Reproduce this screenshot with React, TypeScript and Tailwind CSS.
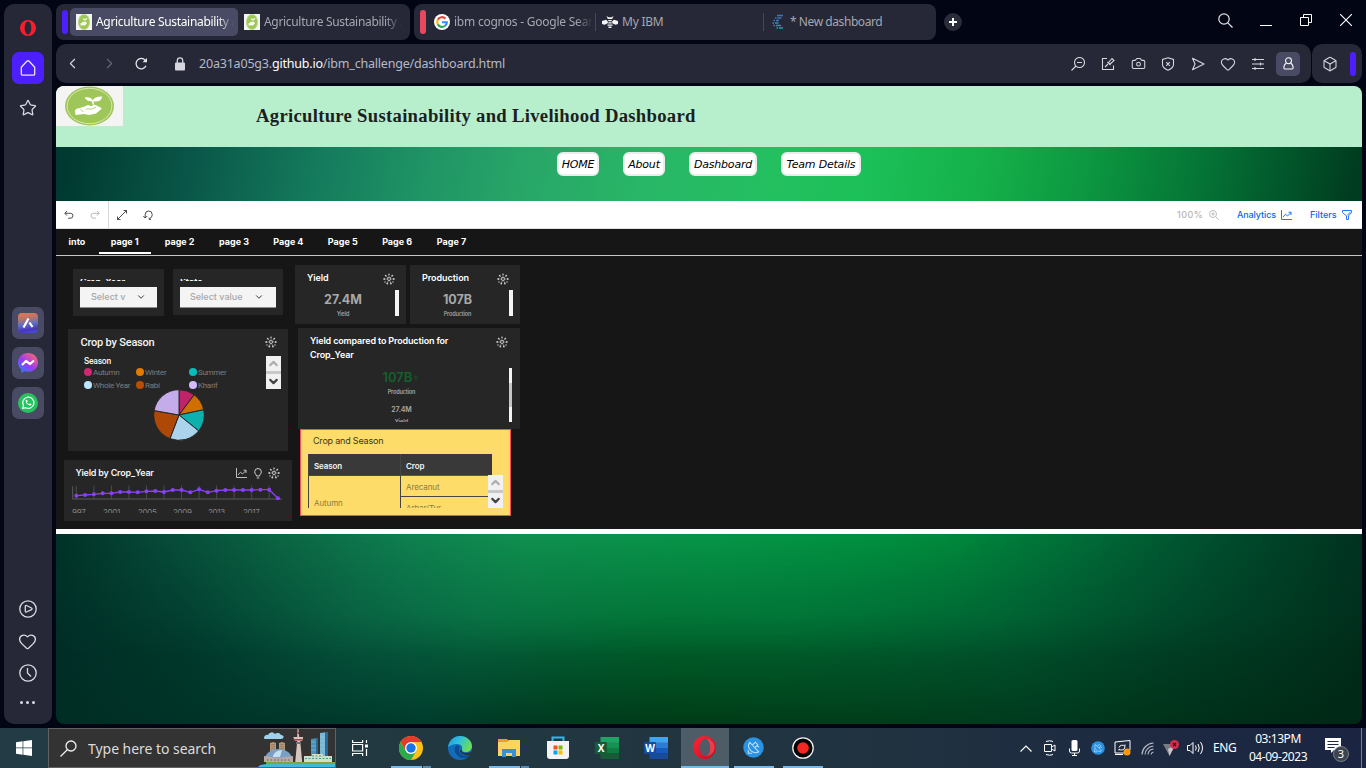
import React from "react";
import {
  ArrowDown, Box, Camera, ChevronDown, ChevronLeft, ChevronRight, ChevronUp, Heart, Star,
} from "lucide-react";

const UI = "font-['Noto_Sans',sans-serif]";
const PLEX = "font-['Inter',sans-serif]";

function OperaLogo({ size = 16 }: { size?: number }) {
  return (
    <svg width={size} height={size} viewBox="0 0 16 16">
      <path fillRule="evenodd" fill="#fa1e2d" d="M8 0a8 8 0 1 0 0 16A8 8 0 0 0 8 0Zm0 1.600c2 0 3.300 2.700 3.300 6.400S10 14.400 8 14.400 4.700 11.700 4.700 8 6 1.600 8 1.600Z" />
    </svg>
  );
}

function OperaAppLogo() {
  return (
    <svg width="23" height="23" viewBox="0 0 23 23">
      <defs>
        <linearGradient id="operaRing" x1="0" y1="0" x2="1" y2="1"><stop offset="0" stopColor="#ff2436" /><stop offset="1" stopColor="#c3101f" /></linearGradient>
      </defs>
      <path fillRule="evenodd" fill="url(#operaRing)" d="M11.500 0a11.500 11.500 0 1 0 0 23 11.500 11.500 0 0 0 0-23Zm.8 2.800c3 0 4.800 3.700 4.800 8.700s-1.800 8.700-4.800 8.700-5.300-3.700-5.300-8.700 2.300-8.700 5.300-8.700Z" />
      <path fill="#f2626c" opacity=".55" d="M13 2.800c5 .4 8.500 4 8.500 8.700S18 19.800 13 20.200c2.800-1.200 4.100-4.700 4.100-8.700S15.800 4 13 2.800Z" />
    </svg>
  );
}

function LeafLogo({ w, h }: { w: number; h: number }) {
  return (
    <svg width={w} height={h} viewBox="0 0 67 40" preserveAspectRatio="none" className="shrink-0">
      <rect width="67" height="40" fill="#f4f4f2" />
      <ellipse cx="33.500" cy="20" rx="24.500" ry="19.600" fill="#9fc659" />
      <ellipse cx="33.500" cy="20" rx="22.400" ry="17.700" fill="none" stroke="#dcebbd" strokeWidth=".9" />
      <path fill="#fff" d="M19 25l1-2 8-2.300 4-1.700 3.500 1.200 2-1.700 2 .5 4 2 2.500 1.500-6 5-7 1.500-5-1-8.500 1z" />
      <path fill="#fff" d="M36.700 18.500l-.9-3.300c-3.200.3-6.200-1-7-3.900 3.800-.6 7 .6 7.800 3 1.300-2.600 5-4.100 9.700-3.800-.5 3.800-3.700 5.700-8.800 4.800l.5 3.200z" />
      <path stroke="#9fc659" strokeWidth=".8" fill="none" d="M24 22.500l3.500 3.500M30 23h6l4-1.800" />
    </svg>
  );
}

function GoogleLogo() {
  return (
    <svg width="16" height="16" viewBox="0 0 32 32" className="shrink-0">
      <circle cx="16" cy="16" r="16" fill="#fff" />
      <g fill="none" strokeWidth="4.400">
        <path stroke="#ea4335" d="M7.500 11.500A9.600 9.600 0 0 1 22.800 9.200" />
        <path stroke="#fbbc05" d="M7.500 11.500a9.600 9.600 0 0 0 0 9" />
        <path stroke="#34a853" d="M7.500 20.500a9.600 9.600 0 0 0 14.800 3" />
        <path stroke="#4285f4" d="M22.300 23.500A9.600 9.600 0 0 0 25.600 16.500H16" />
      </g>
    </svg>
  );
}

function BeeLogo() {
  return (
    <svg width="16" height="12" viewBox="0 0 16 12" className="shrink-0" fill="#f4f4f4">
      <path d="M0 5l4-1.200 1.800 1.400v2L2.500 8.800 0 8zM16 5l-4-1.200-1.800 1.400v2l3.300 1.600L16 8zM4.500 0l2 1.200h3l2-1.200-1.300 3H5.800zM6.300 4h3.400v1.200H6.300zM6.300 6.200h3.400v1.200H6.300zM5.500 8.400h5v1.300h-5zM6.500 10.600h3V12h-3z" />
    </svg>
  );
}

function CognosLogo() {
  return (
    <svg width="12" height="16" viewBox="0 0 12 16" className="shrink-0" fill="none" strokeWidth="1.500">
      <path stroke="#3b78b8" d="M5 1.500h6M3 4h1.500M5.500 4h4M1.500 6.500H3M4 6.500h3" />
      <path stroke="#2f95a6" d="M.5 9H2M3 9h3.500M1.500 11.500H3M4 11.500h5M4.500 14H6M7 14h4" />
    </svg>
  );
}

function Gear({ className = "" }: { className?: string }) {
  return (
    <svg width="12" height="12" viewBox="0 0 12 12" className={"shrink-0 " + className} fill="none" stroke="#cfcfcf">
      <circle cx="6" cy="6" r="1.500" strokeWidth=".9" />
      <g fill="#cfcfcf" stroke="none">
        <circle cx="6" cy="1.300" r=".8" /><circle cx="4.300" cy="10.500" r=".9" /><circle cx="7.900" cy="10.500" r=".9" />
        <circle cx="1.200" cy="6" r=".9" /><circle cx="10.800" cy="6" r=".9" />
        <circle cx="2.700" cy="2.600" r=".9" /><circle cx="9.300" cy="2.600" r=".9" />
        <circle cx="2" cy="9" r=".7" /><circle cx="10" cy="9" r=".7" />
      </g>
      <path strokeWidth=".5" d="M6 2v2.500M4.500 10l.8-2.600M7.700 10l-.9-2.600M2 6h2.500M10 6H7.500M3 3l2 2M9 3L7 5" />
    </svg>
  );
}

function ChartIcon({ className = "" }: { className?: string }) {
  return (
    <svg width="11" height="10" viewBox="0 0 11 10" fill="none" stroke="currentColor" className={"shrink-0 " + className}>
      <path d="M.5 0v9.500H11M2 7l2.500-2.800L6.500 6l3.500-3.500M7.500 2.200H10V5" strokeWidth=".9" />
    </svg>
  );
}

function Sidebar() {
  const cell = "flex h-8 w-8 shrink-0 items-center justify-center";
  return (
    <aside className="ml-1 mt-1 flex h-[720px] w-12 shrink-0 flex-col items-center rounded-[10px] bg-[#262837] pt-2 text-[#d9dae3]">
      <div className={cell}><OperaLogo /></div>
      <div className={cell + " mt-2 rounded-[7px] bg-[#4d1fff]"}>
        <svg width="18" height="18" viewBox="0 0 18 18" fill="none" stroke="#e9e6ff" strokeWidth="1.300" strokeLinejoin="round">
          <path d="M2.300 8.200L7.800 2.300a1.700 1.700 0 0 1 2.400 0l5.500 5.900V15a1.200 1.200 0 0 1-1.200 1.200h-11A1.200 1.200 0 0 1 2.300 15z" />
        </svg>
      </div>
      <div className={cell + " mt-2"}><Star size={18} strokeWidth={1.700} /></div>
      <div className="mt-[183px] flex flex-col gap-2">
        <div className={cell + " rounded-[7px] bg-[#484b63]"}>
          <div className="flex h-5 w-5 items-center justify-center rounded-[4px] bg-[linear-gradient(170deg,#e07a52_0%,#bd7368_28%,#5b70c5_55%,#4a35b5_80%,#3f57e8_100%)]">
            <svg width="12" height="12" viewBox="0 0 12 12" fill="none" stroke="#fff" strokeWidth="2.200"><path d="M1.500 10.500L6.500 1.500M7.500 5.500l3 4.500" /></svg>
          </div>
        </div>
        <div className={cell + " rounded-[7px] bg-[#484b63]"}>
          <svg width="20" height="20" viewBox="0 0 20 20">
            <defs><linearGradient id="msg" x1="0" y1="1" x2=".8" y2="0"><stop offset="0" stopColor="#1689ff" /><stop offset=".5" stopColor="#9a3bf5" /><stop offset="1" stopColor="#ff6470" /></linearGradient></defs>
            <path fill="url(#msg)" d="M10 0C4.300 0 0 4.100 0 9.600c0 2.900 1.200 5.300 3.200 7V20l3.200-1.700c1.100.3 2.300.5 3.600.5 5.700 0 10-4 10-9.400S15.700 0 10 0z" />
            <path fill="none" stroke="#fff" strokeWidth="2.200" strokeLinejoin="round" d="M4 12l4-4 4 3 4-3.500" />
          </svg>
        </div>
        <div className={cell + " rounded-[7px] bg-[#484b63]"}>
          <svg width="20" height="20" viewBox="0 0 20 20">
            <circle cx="10" cy="10" r="10" fill="#25c35e" />
            <path d="M4.700 15.500l.8-2.900a5.600 5.600 0 1 1 2.200 2.100z" fill="none" stroke="#fff" strokeWidth="1.200" />
            <path d="M7.600 7.500c0 2.500 2.300 4.900 4.700 4.900.8 0 1.300-.6 1.200-1.200l-1.600-.9-.9.9c-1-.4-1.600-1-2-2l.8-.9-.8-1.500c-.7-.1-1.400.2-1.400.7z" fill="#fff" />
          </svg>
        </div>
      </div>
      <div className="mt-[174px] flex flex-col items-center pr-px">
        <div className={cell}>
          <svg width="18" height="18" viewBox="0 0 18 18" fill="none" stroke="currentColor" strokeWidth="1.300" strokeLinejoin="round"><circle cx="9" cy="9" r="8.200" /><path d="M6.300 6.200C6.300 5.500 7 5.300 7.500 5.500L12.500 8q1.200.8 0 1.600L7.500 12c-.6.300-1.200 0-1.200-.7z" /></svg>
        </div>
        <div className={cell}><Heart size={19} strokeWidth={1.700} /></div>
        <div className={cell}>
          <svg width="18" height="18" viewBox="0 0 18 18" fill="none" stroke="currentColor" strokeWidth="1.300"><circle cx="9" cy="9" r="8.200" /><path d="M8.500 4v5l3.500 3.500" /></svg>
        </div>
        <div className="flex h-[27px] items-center gap-[3px]">
          <i className="h-[3px] w-[3px] rounded-full bg-current" /><i className="h-[3px] w-[3px] rounded-full bg-current" /><i className="h-[3px] w-[3px] rounded-full bg-current" />
        </div>
      </div>
    </aside>
  );
}

function TabStrip() {
  const fade = "overflow-hidden whitespace-nowrap [mask-image:linear-gradient(to_right,black_88%,transparent)]";
  return (
    <div className={UI + " mt-1 flex h-9 text-[12px] tracking-[-0.230px] text-[#a5a7b0]"}>
      <div className="flex w-[354px] items-center rounded-lg bg-[#262837] pl-[6px] tracking-[-0.320px]">
        <div className="h-6 w-[6px] rounded-[3px] bg-[#4d1fff]" />
        <div className="ml-[2px] flex h-7 w-[168px] items-center rounded-[5px] bg-[#484b63] pl-[6px] text-white">
          <LeafLogo w={16} h={16} />
          <span className={fade + " ml-1 w-[138px]"}>Agriculture Sustainability and</span>
        </div>
        <div className="flex items-center pl-[6px]">
          <LeafLogo w={16} h={16} />
          <span className={fade + " ml-1 w-[138px]"}>Agriculture Sustainability and</span>
        </div>
      </div>
      <div className="ml-1 flex w-[522px] items-center rounded-lg bg-[#262837] pl-[6px]">
        <div className="h-6 w-[6px] rounded-[3px] bg-[#e8485f]" />
        <div className="ml-2 flex h-[18px] w-[162px] items-center border-r border-[#444763]">
          <GoogleLogo />
          <span className={fade + " ml-1 w-[139px]"}>ibm cognos - Google Search</span>
        </div>
        <div className="flex h-[18px] w-[168px] items-center border-r border-[#444763] pl-[6px]">
          <BeeLogo /><span className="ml-1">My IBM</span>
        </div>
        <div className="flex items-center pl-2"><CognosLogo /><span className="ml-[6px] tracking-[-0.430px]">* New dashboard</span></div>
      </div>
      <div className="ml-2 flex h-9 w-[18px] items-center">
        <div className="flex h-[18px] w-[18px] items-center justify-center rounded-full bg-[#2a2c3a]">
          <svg width="8" height="8" viewBox="0 0 8 8" stroke="#fff" strokeWidth="2"><path d="M4 0v8M0 4h8" /></svg>
        </div>
      </div>
      <div className="ml-auto flex h-8 w-40 text-[#e6e6ea]">
        <div className="flex w-10 items-center justify-center pr-px">
          <svg width="15" height="15" viewBox="0 0 15 15" fill="none" stroke="#e6e6ea" strokeWidth="1.200"><circle cx="6" cy="6" r="5.200" /><path d="M9.800 9.800l4.700 4.700" /></svg>
        </div>
        <div className="flex w-10 items-center justify-center"><i className="mt-[10px] h-px w-3 bg-white" /></div>
        <div className="flex w-10 items-center justify-center">
          <svg width="12" height="12" viewBox="0 0 12 12" fill="none" stroke="#fff"><path d="M.5 3.500h8v8h-8zM3.500 3.500v-3h8v8h-3" /></svg>
        </div>
        <div className="flex w-10 items-center justify-center">
          <svg width="12" height="12" viewBox="0 0 12 12" stroke="#fff" strokeWidth="1.100"><path d="M0 0l12 12M12 0L0 12" /></svg>
        </div>
      </div>
    </div>
  );
}

function AddressBar() {
  const c = "flex w-[30px] items-center justify-center";
  const s = { width: 14, height: 14, viewBox: "0 0 14 14", fill: "none", stroke: "currentColor", strokeWidth: 1.1 } as const;
  return (
    <div className="mt-1 flex h-[39px] gap-px pr-1 text-[#d5d6de]">
      <div className="flex w-[1255px] rounded-[10px] bg-[#262837] pr-2">
        <div className="flex w-[33px] items-center justify-center"><ChevronLeft size={17} strokeWidth={1.600} /></div>
        <div className="flex w-[41px] items-center justify-center text-[#646778]"><ChevronRight size={17} strokeWidth={1.600} /></div>
        <div className="flex w-[22px] items-center justify-center">
          <svg width="12" height="13" viewBox="0 0 12 13" fill="none" stroke="#e8e8ee" strokeWidth="1.300"><path d="M11 8.800A5.200 5.200 0 1 1 10.300 3.300" /><path d="M7.500 5.200H12V1z" fill="#e8e8ee" stroke="none" /></svg>
        </div>
        <div className="ml-[17px] flex w-[22px] items-center justify-center">
          <svg width="10" height="14" viewBox="0 0 10 14"><rect y="5.500" width="10" height="8" rx="1" fill="#d5d6de" /><path d="M2.300 6V3.500a2.700 2.700 0 0 1 5.400 0V6" fill="none" stroke="#d5d6de" strokeWidth="1.300" /></svg>
        </div>
        <div className={UI + " ml-2 flex items-center pt-px text-[12.500px] tracking-[-0.200px] text-[#b3bac8]"}>20a31a05g3.<span className="text-white">github.io</span>/ibm_challenge/dashboard.html</div>
        <div className="ml-auto flex">
          <div className={c}><svg {...s}><circle cx="8.500" cy="5.500" r="5" /><path d="M5 9l-4.500 4.500M6 5.500h5" /></svg></div>
          <div className={c}><svg {...s}><path d="M6 1.500H1.500v11h11V8.500M4 10l3-3M6.500 5l3 3M7.500 5.500L11 1.500l2 2-4 3.700z" /></svg></div>
          <div className={c}><Camera size={15} strokeWidth={1.700} /></div>
          <div className={c}><svg {...s}><path d="M7 .8l5.500 1.700v5c0 2.500-2.500 4.500-5.500 5.700C4 12 1.500 10 1.500 7.500v-5zM5.200 5.200l3.600 3.600M8.800 5.200L5.200 8.800" /></svg></div>
          <div className={c}><svg {...s} strokeLinejoin="round"><path d="M1.500 1.200L13 7 1.500 12.800 4 7z" /></svg></div>
          <div className={c}><Heart size={16} strokeWidth={1.600} /></div>
          <div className={c}><svg {...s}><path d="M1 2.500h12M1 7h12M1 11.500h12M4 1v3M9.500 5.500v3M4 10v3" /></svg></div>
          <div className={c}>
            <div className="flex h-6 w-6 shrink-0 items-center justify-center rounded-[5px] bg-[#484b63]">
              <svg {...s} width={13} height={13} stroke="#fff"><circle cx="7" cy="4" r="3.200" /><path d="M4.700 6.700C3 7.500 2 9.500 2 11.500c0 1 .6 1.500 1.500 1.500h7c.9 0 1.500-.5 1.500-1.500 0-2-1-4-2.700-4.800" /></svg>
            </div>
          </div>
        </div>
      </div>
      <div className="flex w-[50px] items-center rounded-[10px] bg-[#262837] pl-[10px]">
        <Box size={16} strokeWidth={1.600} /><div className="ml-3 h-6 w-[6px] rounded-[3px] bg-[#4d1fff]" />
      </div>
    </div>
  );
}

function Banner() {
  const items = [["HOME", "w-[42px]"], ["About", "w-[42px]"], ["Dashboard", "w-[68px]"], ["Team Details", "w-[80px]"]];
  return (
    <>
      <header className="flex h-[61px] items-start bg-[#b7efcd]">
        <LeafLogo w={67} h={40} />
        <h1 className="ml-[133px] mt-[18px] whitespace-nowrap font-['Liberation_Serif',serif] text-[18.700px] font-bold leading-6 tracking-[0.280px] text-[#1c1f22]">Agriculture Sustainability and Livelihood Dashboard</h1>
      </header>
      <nav className="flex h-[54px] items-start gap-6 bg-[linear-gradient(100deg,#003930_1%,#0a5849_11%,#147a5c_20%,#1f9365_28%,#28a668_36%,#28b667_45%,#24c060_55%,#1cc058_62%,#15b04a_71%,#0c9640_79%,#057636_87%,#025a2c_93%,#003d20_99%)] pl-[501px] pt-[5px]">
        {items.map(([t, w]) => (
          <a key={t} className={w + " flex h-6 items-center justify-center whitespace-nowrap rounded-[6px] border-2 border-[#ececec] bg-white pt-[2px] font-['DejaVu_Sans',sans-serif] text-[11px] italic tracking-[-0.200px] text-black"}>{t}</a>
        ))}
      </nav>
    </>
  );
}

function CognosBar() {
  return (
    <div className={PLEX + " flex h-7 items-center border-b border-[#e0e0e0] bg-white text-[9px] font-medium text-[#0f62fe]"}>
      <div className="flex h-full w-[53px] items-center border-r border-[#d8d8d8] pl-2 text-[#393939]">
        <svg width="10" height="8" viewBox="0 0 10 8" fill="none" stroke="currentColor" strokeWidth=".9"><path d="M3 0L.8 2.300 3 4.600M1 2.300h5.500a2.400 2.400 0 0 1 0 4.900H4" /></svg>
        <svg width="10" height="8" viewBox="0 0 10 8" fill="none" stroke="#b0b0b0" strokeWidth=".9" className="ml-4"><path d="M7 0l2.200 2.300L7 4.600M9 2.300H3.500a2.400 2.400 0 0 0 0 4.900H6" /></svg>
      </div>
      <svg width="10" height="10" viewBox="0 0 10 10" fill="none" stroke="#393939" strokeWidth=".9" className="ml-2"><path d="M6.500.5h3v3M9.500.5L.5 9.500M.5 6.500v3h3" /></svg>
      <svg width="10" height="10" viewBox="0 0 10 10" fill="none" stroke="#393939" strokeWidth=".9" className="ml-4"><path d="M.3 6l1.900 2 2-2M2.200 7.800V4.500a3.500 3.500 0 0 1 7 0c0 2-1.200 3.500-2.700 4.500M8 9.400H6.200V7.600" /></svg>
      <span className="ml-auto tracking-[0.400px] text-[#b5b5b5]">100%</span>
      <svg width="10" height="10" viewBox="0 0 10 10" fill="none" stroke="#b5b5b5" strokeWidth=".9" className="ml-[6px]"><circle cx="4" cy="4" r="3.500" /><path d="M6.600 6.600l3 3M4 2.300v3.400M2.300 4h3.400" /></svg>
      <span className="ml-[18px] w-[40px] tracking-[-0.100px]">Analytics</span><ChartIcon className="ml-[4px]" />
      <span className="ml-[18px] w-[27px]">Filters</span>
      <svg width="10" height="10" viewBox="0 0 10 10" fill="none" stroke="#2f74fe" strokeWidth="1" className="ml-[5px] mr-[10px]"><path d="M.5.5h9v2L6.500 6v3.500h-2V6L.5 2.500zM5 5.500l3.500-3.500" /></svg>
    </div>
  );
}

function PageTabs() {
  return (
    <div className={PLEX + " flex h-[27px] border-b border-[#c6c6c6] bg-[#161616] text-[9px] font-bold text-white"}>
      <div className="flex w-[42px] items-center justify-center pb-px">into</div>
      {["page 1", "page 2", "page 3", "Page 4", "Page 5", "Page 6", "Page 7"].map((t, i) => (
        <div key={t} className="flex w-[54.400px] justify-center">
          <div className={"flex h-[25px] w-[52px] items-center justify-center " + (i === 0 ? "border-b-2 border-white pt-[2px] pr-px" : "")}>{t}</div>
        </div>
      ))}
    </div>
  );
}

function FilterCard({ title, value, card, box, label }: { title: string; value: string; card: string; box: string; label: string }) {
  return (
    <div className={card + " bg-[#262626] pl-[7px] pt-[10px]"}>
      <div className="h-[2px] overflow-hidden text-[9px] font-semibold leading-[6px] text-white">{title}</div>
      <div className={box + " mt-[6px] flex h-[21px] items-center border-b border-[#8d8d8d] bg-[#f4f4f4] text-[9px] font-medium text-[#a8a8a8]"}>
        <span className={label + " overflow-hidden whitespace-nowrap"}>{value}</span>
        <ChevronDown size={10} strokeWidth={2.400} className="text-[#393939]" />
      </div>
    </div>
  );
}

function Kpi({ title, value, w, mid }: { title: string; value: string; w: string; mid: string }) {
  return (
    <div className={w + " relative h-[59px] bg-[#262626] pt-[7px]"}>
      <div className="flex h-[14px] items-start justify-between pl-3 pr-[11px]">
        <span className="text-[9px] font-semibold leading-3 tracking-[-0.050px] text-white">{title}</span><Gear className="mt-px" />
      </div>
      <div className={mid + " mt-[7px] text-center text-[12.500px] font-bold leading-[14px] text-[#a8a8a8]"}>{value}</div>
      <div className={mid + " mt-[4px] text-center text-[5.500px] font-semibold leading-[6px] tracking-[-0.150px] text-[#a0a0a0]"}>{title}</div>
      <div className="absolute right-[7px] top-[25px] h-[26px] w-1 bg-[#f4f4f4]" />
    </div>
  );
}

function ScrollButtons() {
  return (
    <div className="flex h-[33px] w-[15px] flex-col justify-between bg-[#c8c8c8]">
      <div className="flex h-[15px] items-center justify-center bg-[#f1f1f1] text-[#b0b0b0]"><ChevronUp size={13} strokeWidth={4} /></div>
      <div className="flex h-[15px] items-center justify-center bg-[#f1f1f1] text-[#454545]"><ChevronDown size={13} strokeWidth={4} /></div>
    </div>
  );
}

const SLICES: [number, number, string][] = [
  [0, 37, "#c02468"], [37, 78, "#d06f00"], [78, 129, "#0cb0ac"], [129, 201, "#abd4ec"], [201, 280, "#ad4806"], [280, 360, "#c4abea"],
];
const at = (deg: number) => `${26 + 25.3 * Math.sin((deg * Math.PI) / 180)} ${26 - 25.3 * Math.cos((deg * Math.PI) / 180)}`;

function SeasonCard() {
  const legend = [["Autumn", "bg-[#d12771]"], ["Winter", "bg-[#e07a00]"], ["Summer", "bg-[#08bdba]"], ["Whole Year", "bg-[#bae6ff]"], ["Rabi", "bg-[#ba4e00]"], ["Kharif", "bg-[#d4bbff]"]];
  return (
    <div className="ml-1 mt-[13px] h-[122px] w-[220px] bg-[#262626] pt-[7px]">
      <div className="flex h-[13px] items-start justify-between pl-[12.500px] pr-[11px]">
        <span className="pt-px font-['Roboto',sans-serif] text-[11px] font-medium leading-3 tracking-[-0.200px] text-[#f4f4f4]">Crop by Season</span><Gear />
      </div>
      <div className="mt-[7px] flex justify-between pr-[7px]">
        <div className="pl-[16px] font-['Roboto',sans-serif] text-[8px]">
          <div className="text-[8.500px] font-medium leading-[10px] tracking-[-0.200px] text-[#f4f4f4]">Season</div>
          <div className="mt-px grid h-[22px] grid-cols-[52px_53px_50px] gap-y-[4px] text-[#7d7d7d]">
            {legend.map(([t, c]) => (
              <div key={t} className="flex h-[9px] items-center gap-px whitespace-nowrap leading-[9px] tracking-[-0.280px]"><i className={c + " h-2 w-2 shrink-0 rounded-full"} /><span className="pt-[2px]">{t}</span></div>
            ))}
          </div>
        </div>
        <ScrollButtons />
      </div>
      <svg width="52" height="52" viewBox="0 0 52 52" className="ml-[84.500px]">
        {SLICES.map(([a, b, c]) => <path key={a} d={`M26 26L${at(a)}A25.3 25.3 0 0 1 ${at(b)}Z`} fill={c} stroke="#262626" />)}
      </svg>
    </div>
  );
}

const TREND = [528, 526, 524, 521, 521, 517, 517, 518, 515, 514, 517, 511, 511, 518, 509, 518, 513, 511, 511, 511, 511, 510, 510, 536];

function TrendCard() {
  const px = (i: number) => 13 + i * 26.3;
  return (
    <div className="mt-[9px] h-[61px] w-[228px] bg-[#262626] pt-[7px]">
      <div className="flex items-center pl-[11.500px] pr-3">
        <span className="flex-1 text-[9px] font-semibold leading-3 tracking-[-0.220px] text-[#f4f4f4]">Yield by Crop_Year</span>
        <ChartIcon className="text-[#d0d0d0]" />
        <svg width="8" height="11" viewBox="0 0 8 11" fill="none" stroke="#d0d0d0" className="ml-[7px]"><path d="M2.500 8c0-1.500-1.800-2-1.800-4.200a3.300 3.300 0 0 1 6.600 0C7.300 6 5.500 6.500 5.500 8zM2.800 10h2.400" /></svg>
        <Gear className="ml-[6px]" />
      </div>
      <svg width="211" height="15" viewBox="0 496 633 45" className="ml-2 mt-[6px] block">
        <path stroke="#5a5a5a" strokeWidth="3" d="M1 538H630M2 500V538" />
        {TREND.map((_, i) => i % 2 === 0 && <path key={i} stroke="#4c4c4c" strokeWidth="3" d={`M${px(i)} 498V538`} />)}
        <polyline fill="none" stroke="#8a3ffc" strokeWidth="4" points={TREND.map((y, i) => `${px(i)},${y}`).join(" ")} />
        {TREND.map((y, i) => <circle key={i} cx={px(i)} cy={y} r="6" fill="#8a3ffc" />)}
      </svg>
      <div className="ml-2 mt-[8px] flex h-[5px] items-start overflow-hidden text-[8px] leading-[8px] text-[#858585]">
        <span className="w-[31px] tracking-[-0.300px]">997</span>
        {["2001", "2005", "2009", "2013", "2017"].map((y) => <span key={y} className="w-[35px] tracking-[-0.300px]">{y}</span>)}
      </div>
    </div>
  );
}

function CompareCard() {
  return (
    <div className="relative ml-[3px] mt-1 h-[101px] w-[222px] bg-[#262626] pl-3 pt-[6px]">
      <div className="flex items-start justify-between pr-3">
        <div className="text-[9px] font-semibold leading-[14px] tracking-[-0.160px] text-white">Yield compared to Production for<br />Crop_Year</div>
        <Gear className="mt-[2px]" />
      </div>
      <div className="ml-[32px] mt-[6px] h-[54px] w-[119px] overflow-hidden text-center font-semibold text-[#a8a8a8]">
        <div className="mt-[2px] flex items-center justify-center text-[13px] leading-[15px] text-[#14602d]">107B<ArrowDown size={8} strokeWidth={1.800} className="rotate-180" /></div>
        <div className="mt-[4px] text-[5.500px] leading-[6px] tracking-[-0.150px]">Production</div>
        <div className="mt-[10px] text-[7px] leading-[9px] tracking-[-0.100px]">27.4M</div>
        <div className="mt-[5px] text-[5.500px] leading-[6px]">Yield</div>
      </div>
      <div className="absolute right-2 top-[40px] flex h-[54px] w-[3px] flex-col justify-center bg-[#f4f4f4]"><div className="h-[24px] bg-[#c6c6c6]" /></div>
    </div>
  );
}

function CropTable() {
  return (
    <div className="relative ml-[5px] h-[87px] w-[211px] border border-[#fa4d56] bg-[#fddc69] pl-[7px] pt-[5px] text-[8px] tracking-[-0.100px]">
      <div className="pl-[5px] text-[9px] leading-3 tracking-[-0.200px] text-[#3d3823]">Crop and Season</div>
      <div className="mt-[7px] grid h-[54px] w-[184px] grid-cols-[91px_92px] overflow-hidden border-l border-[#454545] text-[#8e7b3b]">
        <div>
          <div className="flex h-[22px] items-center border-b border-[#454545] bg-[#393939] pl-[5px] pt-[2px] font-semibold text-[#f4f4f4]">Season</div>
          <div className="pl-[5px] pt-[21px] leading-3">Autumn</div>
        </div>
        <div className="border-l border-[#454545]">
          <div className="flex h-[22px] items-center border-b border-[#5a5a5a] bg-[#393939] pl-[5px] pt-[2px] font-semibold text-[#f4f4f4]">Crop</div>
          <div className="flex h-[21px] items-center border-b border-[#454545] pl-[5px] pt-[2px]">Arecanut</div>
          <div className="flex h-[21px] items-center pl-[5px]">Arhar/Tur</div>
        </div>
      </div>
      <div className="absolute right-[7px] top-[45px]"><ScrollButtons /></div>
    </div>
  );
}

function Canvas() {
  return (
    <div className={PLEX + " flex h-[273px] bg-[#161616] pl-2"}>
      <div className="w-[231px] pt-[13px]">
        <div className="ml-[9px] flex items-start gap-[9px]">
          <FilterCard title="Crop_Year" value="Select v" card="h-[47px] w-[91px]" box="w-[77px]" label="ml-[11px] w-[45px]" />
          <FilterCard title="State" value="Select value" card="h-[46px] w-[110px]" box="w-[96px]" label="ml-[10px] w-[64px]" />
        </div>
        <SeasonCard />
        <TrendCard />
      </div>
      <div className="pt-[9px]">
        <div className="flex gap-1">
          <Kpi title="Yield" value="27.4M" w="w-[111px]" mid="w-[96px]" />
          <Kpi title="Production" value="107B" w="w-[110px]" mid="w-[95px]" />
        </div>
        <CompareCard />
        <CropTable />
      </div>
    </div>
  );
}

function Backdrop() {
  return (
    <div className="grid flex-1">
      <div className="col-start-1 row-start-1 bg-[linear-gradient(90deg,#002d24_0%,#003429_12%,#003c2d_28%,#003a1f_38%,#003c17_48%,#003e1a_62%,#003a1e_75%,#003019_88%,#002816_100%)]" />
      <div className="col-start-1 row-start-1 bg-[linear-gradient(90deg,#002e27_0%,#003a2d_10%,#075a3f_23%,#06673f_32%,#00682f_46%,#006832_56%,#005a31_72%,#004529_84%,#002e1c_100%)] [mask-image:linear-gradient(black_42%,rgba(0,0,0,0.5)_72%,transparent_100%)]" />
      <div className="col-start-1 row-start-1 bg-[linear-gradient(90deg,#003228_0%,#064a38_8%,#0b6543_17%,#0f8050_27%,#10904f_36%,#069548_50%,#009140_62%,#008a3c_68%,#006e38_78%,#00502f_88%,#003320_100%)] [mask-image:linear-gradient(black_0%,rgba(0,0,0,0.55)_28%,transparent_65%)]" />
    </div>
  );
}

function City() {
  return (
    <svg width="77" height="38" viewBox="0 0 77 38">
      <path fill="#9fd3ec" d="M6 9a3 3 0 0 1 4-3 4 4 0 0 1 7-1 4 4 0 0 1 6 1c4 0 3 4 0 4H8c-1 0-2 0-2-1z" />
      <path fill="#45b8d8" d="M0 38c2-3 8-3 12-3h65v3z" /><path fill="#7fa53d" d="M8 33h69v2H8z" />
      <path fill="#b79878" d="M12 14l3-1 3 1v16h-6zM21 14l3-1 3 1v16h-6z" /><path stroke="#725c50" strokeWidth=".8" strokeDasharray="1 1" d="M14 15v14M16 15v14M23 15v14M25 15v14" />
      <path fill="#78a0c6" d="M7 30a13.500 10 0 0 1 27 0z" /><path fill="#c5dff1" d="M15 27a10 8 0 0 1 9-6l-2 7h-7z" /><path fill="#b9a8a4" d="M6 27l14 2 15-2v6H6z" /><path stroke="#765d5d" d="M9 31h23" strokeDasharray="1.500 2" />
      <path fill="#d7c4bc" d="M39.500 0h1l.7 8h4l-1 4h-2l2 21h-7l2-21h-2l-2-4h4z" /><path fill="#a4404b" d="M35.500 10h9v1.500h-9zM39.500 3h1.500v2h-1.500z" /><path fill="#736e83" d="M38 13h4v2h-4z" />
      <path fill="#4793bd" d="M53 10l7-1v21h-7z" /><path fill="#78b8d4" d="M62 4l8-1v27h-8z" /><path fill="#2c6a96" d="M67 3h3v27h-3zM58 9h2v20h-2z" /><path stroke="#a2cbd9" strokeWidth=".5" d="M53 13h5M53 17h5M53 21h5M62 8h5M62 12h5M62 16h5M62 20h5" />
      <path fill="#d2dfc7" d="M46 27h8v-2h11v2h9v6H46z" /><path stroke="#4b9c8d" strokeDasharray="2 1.500" d="M47 29.500h26M54 27h11" />
    </svg>
  );
}

function Office({ letter, a, b, c, d }: { letter: string; a: string; b: string; c: string; d: string }) {
  return (
    <svg width="24" height="22" viewBox="0 0 24 22">
      <rect x="5.500" width="18.500" height="6" fill={a} /><rect x="5.500" y="5.500" width="18.500" height="5.500" fill={b} /><rect x="5.500" y="11" width="18.500" height="5.500" fill={c} /><rect x="5.500" y="16.500" width="18.500" height="5.500" fill={d} />
      <rect y="5" width="12" height="12" rx="1" fill={d} />
      <text x="6" y="14.600" textAnchor="middle" fill="#fff" fontSize="10" fontWeight="700" fontFamily="Open Sans, sans-serif">{letter}</text>
    </svg>
  );
}

function Dish({ size }: { size: number }) {
  return (
    <svg width={size} height={size} viewBox="0 0 22 22"><circle cx="11" cy="11" r="10.700" fill="#2a93e2" /><path d="M7 5.500C5 9 6 12.500 8.500 14.500S14 17 16.500 15.500zM9.500 8.500L13 5.500l2.500 2.500-3 3M14.500 9.500l2.500 1M5.500 13.500v3.500h4" fill="none" stroke="#bfe0fa" strokeWidth="1.100" /></svg>
  );
}

function Taskbar() {
  const apps: { icon: React.ReactNode; bar?: string; active?: boolean; stacked?: boolean }[] = [
    { bar: "w-10", stacked: true, icon: <svg width="24" height="24" viewBox="0 0 24 24"><circle cx="12" cy="12" r="12" fill="#fbc116" /><path d="M12 6h10.400A12 12 0 0 0 1.600 6l5.200 9z" fill="#e23b2e" /><path d="M1.600 6A12 12 0 0 0 12 24l5.200-9H6.800z" fill="#2da94f" /><circle cx="12" cy="12" r="6" fill="#fff" /><circle cx="12" cy="12" r="4.700" fill="#1a73e8" /></svg> },
    { icon: <svg width="24" height="24" viewBox="0 0 24 24"><defs><linearGradient id="edge" x1="0" y1="0" x2="1" y2=".4"><stop offset="0" stopColor="#2098d8" /><stop offset=".5" stopColor="#2fc0dd" /><stop offset="1" stopColor="#69db5d" /></linearGradient></defs><circle cx="12" cy="12" r="12" fill="#126cb9" /><path fill="url(#edge)" d="M0 11C1 4.500 6 0 12 0c7 0 12 5 12 10 0 4-3 6-6 6-4 0-5-1.500-4-3 1-2-1-5-5-5-4 0-7 1.500-9 3z" /><path fill="#0b4c94" d="M9 9c-3 2-3 7 0 10 3 4 9 4 13 0-5 2-11 0-11-5 0-2 1-3 1-3z" /><path fill="#24383f" d="M14 13c-1 2 1 4 4 4 2 0 4-.5 6-2l-1.500 4C18 20.500 12 17.500 12 15c0-1 1-2 2-2z" /></svg> },
    { bar: "w-10", stacked: true, icon: <svg width="22" height="18" viewBox="0 0 22 18"><path fill="#e7a11c" d="M0 0h9l2 2v4H0z" /><path fill="#fcd462" d="M0 3h9l2-2h11v16H0z" /><path fill="#3d8fd1" d="M4 10h14v8h-4v-4H8v4H4z" /></svg> },
    { icon: <svg width="24" height="24" viewBox="0 0 24 24"><path fill="none" stroke="#31b7ea" strokeWidth="2" d="M6.500 6V1.500h11V6" /><path fill="#f3f3f3" d="M1 5h22v15a3 3 0 0 1-3 3H4a3 3 0 0 1-3-3z" /><path fill="#f25022" d="M7.500 9.500h4v4h-4z" /><path fill="#7fba00" d="M12.500 9.500h4v4h-4z" /><path fill="#00a4ef" d="M7.500 14.500h4v4h-4z" /><path fill="#ffb900" d="M12.500 14.500h4v4h-4z" /></svg> },
    { icon: <Office letter="X" a="#21a366" b="#169154" c="#107c41" d="#185c37" /> },
    { icon: <Office letter="W" a="#41a5ee" b="#2b7cd3" c="#185abd" d="#174b9c" /> },
    { bar: "w-full", active: true, icon: <OperaAppLogo /> },
    { bar: "w-10", icon: <Dish size={21} /> },
    { bar: "w-10", icon: <svg width="22" height="22" viewBox="0 0 22 22"><circle cx="11" cy="11" r="10.200" fill="#050505" stroke="#f2f2f2" strokeWidth="1.300" /><circle cx="11" cy="11" r="5.800" fill="#f42823" /></svg> },
  ];
  const t = "flex w-6 items-center justify-center";
  return (
    <div className={UI + " flex h-10 bg-[linear-gradient(90deg,#233b44_0%,#223841_35%,#203240_65%,#1c2841_88%,#1b2542_100%)] text-white"}>
      <div className="flex w-12 items-center justify-center">
        <svg width="16" height="16" viewBox="0 0 16 16" fill="#fff"><path d="M0 2.200L6.600 1.300v6.300H0zM7.300 1.200L16 0v7.600H7.300zM0 8.300h6.600v6.400L0 13.800zM7.300 8.300H16V16l-8.700-1.200z" /></svg>
      </div>
      <div className="flex w-[288px] items-center border border-[#5f6163] bg-[#333333] pl-[11px]">
        <svg width="17" height="17" viewBox="0 0 17 17" fill="none" stroke="#f0f0f0" strokeWidth="1.300"><circle cx="11" cy="6" r="5" /><path d="M7.500 9.500L.5 16.500" /></svg>
        <span className="ml-[11px] whitespace-nowrap text-[14px] tracking-[-0.040px] text-[#dcdcdc]">Type here to search</span>
        <div className="ml-auto self-end"><City /></div>
      </div>
      <div className="flex w-[48px] items-center justify-center">
        <svg width="17" height="16" viewBox="0 0 17 16" fill="none" stroke="#fff" strokeWidth="1.200"><path d="M.6 0v2.500h10V0M.6 4.500h10v6.500H.6zM.6 16v-2.500h10V16M14.500 0v3M14.500 9v7" /><path fill="#fff" stroke="none" d="M13 4.500h3v3h-3z" /></svg>
      </div>
      <div className="ml-[2px] flex">
        {apps.map((a, i) => (
          <div key={i} className="flex w-[49px] justify-center">
            <div className={"flex w-12 flex-col items-center " + (a.active ? "bg-[#4d5c66]" : "")}>
              <div className="flex flex-1 items-center pt-px">{a.icon}</div>
              <div className={"flex h-[2px] justify-end " + (a.bar ? a.bar + " bg-[#76b9ed]" : "")}>
                {a.stacked && <i className="h-full w-[9px] border-l border-[#22333c] bg-[#5a8bb0]" />}
              </div>
            </div>
          </div>
        ))}
      </div>
      <div className="ml-auto flex">
        <div className={t}><svg width="12" height="7" viewBox="0 0 12 7" fill="none" stroke="#fff" strokeWidth="1.200"><path d="M.5 6.500L6 1l5.500 5.500" /></svg></div>
        <div className={t}><svg width="12" height="16" viewBox="0 0 12 16" fill="none" stroke="#fff"><path d="M2 1.500q4-1.500 7 0M2 14.500q4 1.500 7 0M.5 4.500h7v7h-7zM7.500 7l3.500-2v6L7.500 9" /></svg></div>
        <div className={t}><svg width="11" height="16" viewBox="0 0 11 16" fill="none" stroke="#fff"><rect x="2.500" y="0" width="6" height="11" rx="1.500" fill="#fff" stroke="none" /><path d="M.5 8.500v2.500q0 2 2 2h6q2 0 2-2V8.500M5.500 13v2M3 15.500h5" /></svg></div>
        <div className={t}><Dish size={14} /></div>
        <div className={t}><svg width="17" height="16" viewBox="0 0 17 16" fill="none" stroke="#fff"><path d="M1 2l15-1.500V10M1 2v11h9M1 14.500h8M5 7.500a3.500 3.500 0 0 1 6-1V4.500M11 7a3.500 3.500 0 0 1-6 2v1.500" /><circle cx="13" cy="12" r="3.500" fill="#ff9a0b" stroke="none" /></svg></div>
        <div className={t + " ml-px"}><svg width="13" height="14" viewBox="0 0 13 14" fill="none" stroke="#b8bdc8" strokeWidth="1.100"><path d="M1 13.500A12 12 0 0 1 12.500 2M4 13.500A9 9 0 0 1 12.500 5M7 13.500A6 6 0 0 1 12.500 8M10 13.500a3 3 0 0 1 2.500-2.500" /></svg></div>
        <div className={t}><svg width="16" height="17" viewBox="0 0 16 17"><path fill="#777b82" d="M0 4h13L6.500 16z" /><path fill="#c5c7ca" d="M6.500 16L5 9l7-4z" /><circle cx="11.500" cy="4.500" r="4.500" fill="#d32d4c" /><path stroke="#4b0915" strokeWidth="1.200" d="M10 3l3 3M13 3l-3 3" /></svg></div>
        <div className={t}><svg width="17" height="14" viewBox="0 0 17 14" fill="none" stroke="#fff"><path d="M.5 4.500h2.500L6 1.500v11L3 9.500H.5zM8.500 4.500q1.500 2.500 0 5M11 3q2.500 4 0 8M13.500 1q4 6 0 12" /></svg></div>
        <div className="ml-[6px] flex w-[26px] items-center text-[12px] tracking-[-0.400px]">ENG</div>
        <div className="ml-[6px] flex w-[66px] flex-col items-center whitespace-nowrap pt-[2px] text-[12px] leading-[18px] tracking-[-0.450px]"><span>03:13PM</span><span>04-09-2023</span></div>
        <div className="ml-[14px] flex w-[36px] items-center pt-[4px]">
          <svg width="25" height="25" viewBox="0 0 25 25" className="shrink-0"><path fill="#fff" d="M0 0h16v12H9l-3 3v-3H0z" /><path stroke="#1c2742" d="M2.500 3.500h11M2.500 6.500h11M2.500 9.500h7" /><circle cx="16" cy="16" r="7.500" fill="#3e444e" stroke="#8b9098" strokeWidth=".8" /><text x="16" y="20" textAnchor="middle" fill="#fff" fontSize="11" fontFamily="Noto Sans, sans-serif">3</text></svg>
        </div>
        <div className="mr-1 w-px bg-[#747e8c]" />
      </div>
    </div>
  );
}

export default function App() {
  return (
    <div className="flex h-[768px] w-[1366px] flex-col overflow-hidden bg-[#020514]">
      <div className="flex h-[728px]">
        <Sidebar />
        <div className="ml-1 flex w-[1310px] flex-col">
          <TabStrip />
          <AddressBar />
          <main className="mt-[3px] flex h-[638px] w-[1306px] flex-col overflow-hidden rounded-[8px]">
            <Banner />
            <CognosBar />
            <PageTabs />
            <Canvas />
            <div className="h-[5px] bg-white" />
            <Backdrop />
          </main>
        </div>
      </div>
      <Taskbar />
    </div>
  );
}
